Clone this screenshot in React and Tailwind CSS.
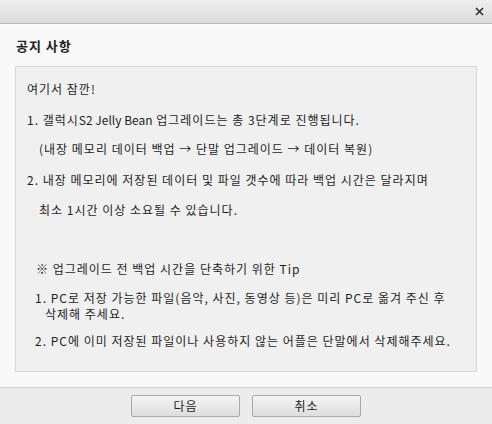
import React from 'react';

const FONT = { fontFamily: '"Noto Sans CJK KR", "Noto Sans", sans-serif' };

const Btn = ({ children }) => (
  <button className="w-[109px] h-[22px] border border-[#a9a9a9] rounded-[2px] bg-gradient-to-b from-[#f4f4f4] to-[#dedede] text-[12px] leading-[20px] tracking-[1px] text-[#1e1e1e]">
    {children}
  </button>
);

const App = () => {
  return (
    <div className="w-[492px] h-[424px] flex flex-col bg-[#f9f9f9] overflow-hidden text-[#1e1e1e]" style={FONT}>
      {/* 상단 바 */}
      <div className="h-[24px] shrink-0 flex items-center justify-end pr-[8px] bg-gradient-to-b from-[#efefef] to-[#dadada] border-b border-[#b9b9b9]">
        <svg width="9" height="9" viewBox="0 0 9 9">
          <path d="M1 1 L8 8 M8 1 L1 8" stroke="#2a2a2a" strokeWidth="1.5" />
        </svg>
      </div>

      <div className="flex-1 flex flex-col px-[15px] border-t border-white">
        <h1 className="mt-[13px] h-[16px] leading-[16px] text-[13px] font-bold tracking-[1px] pl-[1px]">공지 사항</h1>

        <div className="mt-[12px] h-[306px] border border-[#d6d6d6] bg-[#f0f0f0] text-[12px] leading-[16px] tracking-[1px] whitespace-nowrap">
          <p className="mt-[14px] pl-[11px]">여기서 잠깐!</p>
          <p className="mt-[15px] pl-[11px]">1. 갤럭시<span className="tracking-normal">S2 Jelly Bean</span> 업그레이드는 총 3단계로 진행됩니다.</p>
          <p className="mt-[13px] pl-[23px]">(내장 메모리 데이터 백업 → 단말 업그레이드 → 데이터 복원)</p>
          <p className="mt-[15px] pl-[11px]">2. 내장 메모리에 저장된 데이터 및 파일 갯수에 따라 백업 시간은 달라지며</p>
          <p className="mt-[14px] pl-[23px]">최소 1시간 이상 소요될 수 있습니다.</p>

          <p className="mt-[43px] pl-[20px]">※ 업그레이드 전 백업 시간을 단축하기 위한 Tip</p>
          <p className="mt-[13px] pl-[19px]">1. PC로 저장 가능한 파일(음악, 사진, 동영상 등)은 미리 PC로 옮겨 주신 후</p>
          <p className="pl-[29px]">삭제해 주세요.</p>
          <p className="mt-[11px] pl-[19px]">2. PC에 이미 저장된 파일이나 사용하지 않는 어플은 단말에서 삭제해주세요.</p>
        </div>
      </div>

      {/* 하단 버튼 */}
      <div className="h-[37px] shrink-0 flex items-center justify-center gap-[12px] bg-[#ececec] border-t border-[#d0d0d0]">
        <Btn>다음</Btn>
        <Btn>취소</Btn>
      </div>
    </div>
  );
};

export default App;
